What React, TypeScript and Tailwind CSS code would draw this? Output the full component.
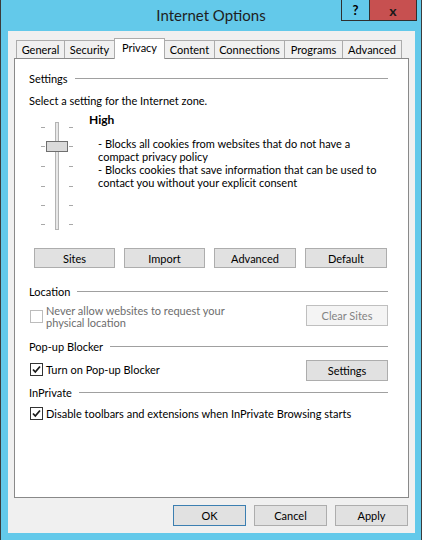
import { ReactNode } from "react";

const tabs = [
  { label: "General", w: "w-[49px]" },
  { label: "Security", w: "w-[51px]" },
  { label: "Privacy", w: "w-[51px]", active: true },
  { label: "Content", w: "w-[51px]" },
  { label: "Connections", w: "w-[71px]" },
  { label: "Programs", w: "w-[59px]" },
  { label: "Advanced", w: "w-[60px]" },
];

const ticks = ["top-[5px]", "top-[24px]", "top-[44px]", "top-[64px]", "top-[83px]", "top-[102px]"];

function Heading({ children, className = "" }: { children: ReactNode; className?: string }) {
  return (
    <div className={`flex items-center h-[15px] ${className}`}>
      <span>{children}</span>
      <div className="flex-1 h-px bg-[#a0a0a0] ml-[7px]" />
    </div>
  );
}

function Button({ children, className = "", disabled = false }: { children: ReactNode; className?: string; disabled?: boolean }) {
  return (
    <div
      className={`flex items-center justify-center border ${
        disabled ? "bg-[#f4f4f4] border-[#bfbfbf] text-[#838383]" : "bg-[#e1e1e1] border-[#adadad] text-black"
      } ${className}`}
    >
      {children}
    </div>
  );
}

function Checkbox({ checked = false, disabled = false }: { checked?: boolean; disabled?: boolean }) {
  return (
    <div
      className={`w-[13px] h-[13px] shrink-0 border bg-white flex items-center justify-center ${
        disabled ? "border-[#bcbcbc]" : "border-[#333333]"
      }`}
    >
      {checked && (
        <svg width="11" height="11" viewBox="0 0 11 11">
          <path d="M2 5.5 L4.3 8 L9 2.5" fill="none" stroke="#1a1a1a" strokeWidth="1.8" />
        </svg>
      )}
    </div>
  );
}

function Slider() {
  return (
    <div className="relative w-[32px] h-[108px] shrink-0 ml-[12px] mt-[10px]">
      {ticks.map((t) => (
        <div key={t} className={`absolute ${t} left-0 w-[4px] h-px bg-[#a8a8a8]`} />
      ))}
      {ticks.map((t) => (
        <div key={t + "r"} className={`absolute ${t} left-[28px] w-[4px] h-px bg-[#a8a8a8]`} />
      ))}
      <div className="absolute left-[14px] top-0 w-[4px] h-[108px] border border-[#b4b4b4] bg-[#e7e7e7]" />
      <div className="absolute left-[5px] top-[19px] w-[22px] h-[11px] border border-[#6f6f6f] bg-[#dadada]" />
    </div>
  );
}

export default function App() {
  return (
    <div className="w-[422px] h-[540px] bg-[#63c9ea] border-x border-[#3b3b3b] flex flex-col font-['Lato',sans-serif] text-[11px] leading-[15px] text-black">
      {/* Title bar */}
      <div className="grid grid-cols-[1fr_auto_1fr] h-[31px]">
        <div />
        <div className="pt-[5px] text-[15px] leading-[20px] text-[#1e1e1e]">Internet Options</div>
        <div className="flex justify-end items-start pr-[4px]">
          <div className="w-[29px] h-[21px] border border-t-0 border-[#2f2f2f] flex items-center justify-center font-bold text-[13px]">
            ?
          </div>
          <div className="w-[47px] h-[21px] border border-t-0 border-l-0 border-[#2f2f2f] bg-[#c75050] flex items-center justify-center font-bold text-[14px] text-[#1a1a1a]">
            x
          </div>
        </div>
      </div>

      {/* Client area */}
      <div className="ml-[7px] w-[407px] h-[502px] bg-[#f0f0f0] flex flex-col">
        <div className="flex items-end h-[27px] pl-[8px]">
          {tabs.map((t, i) =>
            t.active ? (
              <div
                key={t.label}
                className={`${t.w} ${i ? "-ml-px" : ""} relative z-10 h-[21px] -mb-px bg-white border border-b-0 border-[#acacac] flex justify-center pt-[1px]`}
              >
                {t.label}
              </div>
            ) : (
              <div
                key={t.label}
                className={`${t.w} ${i ? "-ml-px" : ""} h-[18px] bg-[#f0f0f0] border border-b-0 border-[#acacac] flex justify-center pt-px`}
              >
                {t.label}
              </div>
            )
          )}
        </div>

        <div className="ml-[6px] w-[395px] h-[440px] border border-[#898989] bg-white pl-[14px] pr-[20px] pt-[12px] flex flex-col">
          <Heading>Settings</Heading>
          <div className="mt-[7px]">Select a setting for the Internet zone.</div>

          <div className="flex mt-[4px]">
            <Slider />
            <div className="ml-[16px] flex flex-col">
              <div className="font-bold text-[12px]">High</div>
              <div className="pl-[9px] mt-[10px] leading-[13px] whitespace-nowrap">
                <p>- Blocks all cookies from websites that do not have a</p>
                <p>compact privacy policy</p>
                <p>- Blocks cookies that save information that can be used to</p>
                <p>contact you without your explicit consent</p>
              </div>
            </div>
          </div>

          <div className="flex gap-[9px] ml-[5px] mt-[18px]">
            <Button className="w-[81px] h-[20px]">Sites</Button>
            <Button className="w-[81px] h-[20px]">Import</Button>
            <Button className="w-[82px] h-[20px]">Advanced</Button>
            <Button className="w-[82px] h-[20px]">Default</Button>
          </div>

          <Heading className="mt-[16px]">Location</Heading>
          <div className="flex justify-between items-start h-[24px] mt-[6px]">
            <div className="flex ml-px">
              <div className="mt-[5px]">
                <Checkbox disabled />
              </div>
              <div className="ml-[3px] leading-[12px] text-[#6d6d6d]">
                <p>Never allow websites to request your</p>
                <p>physical location</p>
              </div>
            </div>
            <Button disabled className="w-[82px] h-[21px]">
              Clear Sites
            </Button>
          </div>

          <Heading className="mt-[10px]">Pop-up Blocker</Heading>
          <div className="flex justify-between items-start h-[21px] mt-[6px]">
            <div className="flex items-center h-[15px] mt-[2px] ml-px">
              <Checkbox checked />
              <span className="ml-[3px]">Turn on Pop-up Blocker</span>
            </div>
            <Button className="w-[82px] h-[21px]">Settings</Button>
          </div>

          <Heading className="mt-[4px]">InPrivate</Heading>
          <div className="flex items-center h-[15px] mt-[6px] ml-px">
            <Checkbox checked />
            <span className="ml-[3px] whitespace-nowrap">Disable toolbars and extensions when InPrivate Browsing starts</span>
          </div>
        </div>

        <div className="flex justify-end gap-[8px] pr-[7px] mt-[7px]">
          <Button className="w-[73px] h-[21px] !border-[#3c7fb1]">OK</Button>
          <Button className="w-[73px] h-[21px]">Cancel</Button>
          <Button className="w-[73px] h-[21px]">Apply</Button>
        </div>
      </div>
    </div>
  );
}
